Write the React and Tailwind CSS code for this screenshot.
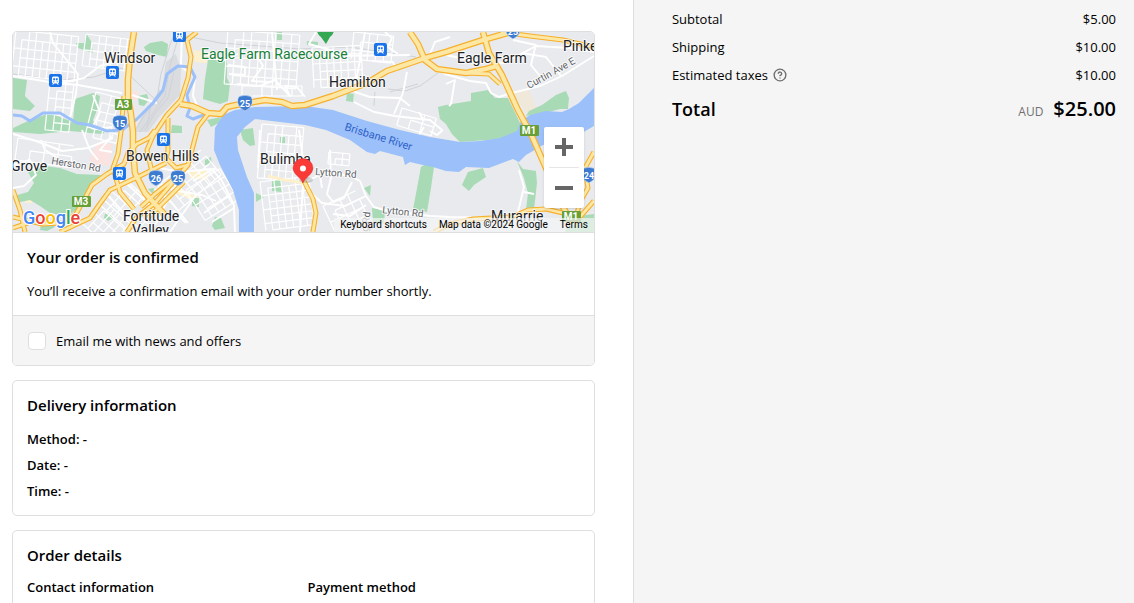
import React from 'react';
import { CircleHelp } from 'lucide-react';

const parks = [
    '76,43 84,43 86,33 91,41 93,53 78,48',
    '144,47 150,43 162,41 168,44 167,57 158,55 146,51',
    '13,78 27,80 25,96 35,106 30,111 13,109',
    '13,128 28,121 50,113 70,121 92,129 92,133 70,131 40,134 13,132',
    '75,99 93,93 100,96 98,108 93,120 97,128 84,128 73,122',
    '138,96 147,94 149,100 144,106 139,105',
    '208,60 227,60 227,78 230,84 228,101 220,104 203,99 205,79',
    '277,32 282,32 282,40 277,40',
    '207,120 221,117 219,123 211,127',
    '172,125 182,126 182,133 171,133',
    '307,41 318,42 318,45 307,45',
    '347,93 354,94 353,102 346,101',
    '438,107 446,105 471,101 471,93 488,90 495,98 508,98 524,131 500,139 460,142 452,134 446,124 440,119',
    '526,116 529,111 542,105 556,95 566,91 569,98 568,109 560,109 545,113',
    '240,130 253,128 255,145 250,146 243,140',
    '421,167 426,164 434,167 431,188 427,212 413,210',
    '364,188 371,185 370,196',
    '372,208 385,210 384,224 373,222',
    '468,172 483,168 486,177 474,185 469,191 462,185',
    '517,161 523,169 536,171 537,183 534,210 526,210 528,193 524,178',
    '28,172 44,166 60,168 77,174 100,175 104,177 88,188 83,203 75,211 66,216 50,213 40,206 30,200 15,203 14,196 28,192 34,183',
    '84,130 106,130 103,134 90,133',
    '105,214 110,213 113,218 108,221 104,218',
    '41,225 50,222 55,227 47,231 40,230',
    '148,189 154,188 153,194',
    '205,160 211,157 212,164 205,165',
    '192,198 199,198 199,207 192,206',
    '215,217 221,218 225,228 215,230 212,226',
    '272,179 282,179 282,192 272,191',
    '280,137 285,137 285,144 280,143',
    '256,193 264,197 256,202',
    '571,217 594,214 594,232 565,232',
];

// x, y, columns, rows, column step, row step, angle
const blocks = [
    [16, 30, 9, 5, 7, 9, 6],
    [86, 34, 7, 4, 7, 8, 7],
    [50, 82, 3, 6, 8, 8, 6],
    [96, 92, 4, 5, 8, 9, 14],
    [18, 138, 4, 2, 14, 11, 8],
    [228, 30, 9, 6, 8, 9, 4],
    [242, 86, 6, 1, 10, 10, 0],
    [312, 48, 7, 5, 7, 8, -3],
    [354, 32, 5, 3, 8, 9, 6],
    [262, 124, 6, 6, 7, 9, 5],
    [260, 182, 7, 7, 7, 7, -7],
    [329, 152, 3, 2, 7, 6, 5],
    [323, 206, 4, 3, 9, 9, -25],
    [124, 178, 6, 4, 9, 9, 42],
    [104, 200, 6, 4, 7, 8, 42],
    [186, 190, 5, 4, 8, 9, -32],
    [158, 186, 7, 4, 8, 8, -40],
    [402, 108, 3, 2, 12, 9, 17],
];

function blockPath([, , cols, rows, dx, dy]) {
    let d = '';
    for (let c = 0; c <= cols; c++) {
        const top = c % 3 === 1 ? dy : 0;
        d += `M${c * dx} ${top}V${rows * dy}`;
    }
    for (let r = 0; r <= rows; r++) {
        d += `M${r % 2 ? dx : 0} ${r * dy}H${cols * dx}`;
    }
    return d;
}

const streets = [
    'M13 76 55 83 78 85 122 93 M50 32 53 43 78 74 76 94 70 118 M61 83 84 78 100 66 122 60',
    'M93 95 100 112 93 126 97 129 112 127 M113 135 100 150 112 152 M13 134 36 141 62 151 88 148 113 138',
    'M13 165 30 160 36 175 24 186 13 188 M41 140 45 150 58 158 M82 130 90 150 98 160',
    'M160 168 180 172 212 169 222 181 234 205 235 232 M160 184 178 191 202 195 216 201 M196 195 170 232 M180 177 163 209',
    'M155 189 171 202 188 223 M105 192 133 223 M125 182 160 214 M215 168 193 181 M230 195 204 213 M234 208 212 222',
    'M195 77 193 96 200 112 208 118 M182 32 181 66 188 72 M228 65 245 67 245 75 229 74 M205 54 222 61 238 54',
    'M237 84 260 86 275 80 290 96 285 86 297 87 305 97 M255 52 263 66 252 81 270 82 M272 32 277 90',
    'M300 50 330 56 410 55 M365 32 360 60 354 92 M407 72 403 93 394 114 M354 102 374 112 395 116 430 120 442 130 M355 92 370 97 400 98 410 106',
    'M429 60 445 74 470 81 486 83 491 93 499 97 512 93 540 86 562 76 594 56 M446 84 455 80 451 104 449 106 M513 40 536 45 534 52 531 65 540 76',
    'M446 55 470 60 504 63 536 46 570 48 594 52 M430 54 435 42 450 37 M522 53 546 57 561 76',
    'M302 183 320 175 332 173 350 176 360 181 366 196 374 207 384 210 M384 210 400 212 430 216 450 217 490 218',
    'M303 185 300 232 M330 150 331 178 327 194 333 202 344 198 352 182 M320 175 322 188 M310 192 322 203 345 206 366 196 M366 205 350 216 333 214',
    'M519 170 524 187 518 212 M524 192 534 194 M430 131 437 135 443 130 M316 32 309 44 334 51 M299 130 304 166 M260 130 258 168',
    'M385 32 392 38 388 47 398 54 M372 61 393 62 397 71 M424 127 416 140 M419 112 424 121 M155 220 174 211 186 223 M132 95 157 103',
];

const rail = 'M13 74 60 80 94 77 122 68 160 104 M134 132 144 116 157 99 161 74 170 45 175 32 M140 132 150 118 165 96 170 66 179 35 M145 130 156 112 168 98 174 72 M147 128 151 104 160 90 M176 34 220 43 300 49 350 47 416 57 M388 89 405 91 420 86 438 73 M390 92 418 84 M375 92 374 106';

const highways = [
    'M124 96 121 132 118 154 113 168 120 192 134 209',
    'M155 130 149 138 137 144 128 153 124 164 107 174 92 185 84 200 76 214 62 223 42 224 13 217',
    'M166 163 140 176 110 190 99 205 90 218 60 232',
    'M13 190 20 210 25 232 M13 228 34 221',
    'M197 32 187 40 191 57 188 78 181 100 167 115 153 136 147 150 152 172',
    'M208 114 198 127 192 150 188 165 155 203 136 218 127 232',
    'M168 118 168 151 166 158 176 168 188 165 M180 174 155 194 141 207 M184 182 148 218',
    'M467 73 489 74 500 84',
    'M501 32 530 36 563 40 594 47',
    'M594 152 585 168 588 188 580 202 574 225 M594 201 580 217 546 209 528 210 512 217 473 219 450 224 434 232',
    'M304 181 313 199 316 213 313 232',
];

const motorways = [
    'M134 32 130 58 128 80 128 98 131 114 133 132 133 150 135 173 145 193 165 215',
    'M180 104 192 106 208 113 221 114 227 107 236 105 265 100 282 102 292 106 305 105 333 96 367 83 387 71 425 58 446 52 483 40 511 32',
    'M410 32 418 44 425 60 437 69 466 73 486 69 497 66',
    'M483 32 489 53 502 75 518 110 531 134 546 168 562 205 572 223',
];

const places = [
    { x: 104, y: 63, text: 'Windsor' },
    { x: 457, y: 63, text: 'Eagle Farm' },
    { x: 563, y: 51, text: 'Pinkenba' },
    { x: 329, y: 87, text: 'Hamilton' },
    { x: 126, y: 161, text: 'Bowen Hills' },
    { x: 260, y: 164, text: 'Bulimba' },
    { x: 11, y: 171, text: 'Grove' },
    { x: 123, y: 221, text: 'Fortitude' },
    { x: 132, y: 235, text: 'Valley' },
    { x: 491, y: 221, text: 'Murarrie' },
];

const stations = [[49, 74], [106, 66], [173, 29], [374, 43], [157, 133], [113, 167]];
const shields = [[120, 123, '15'], [245, 103, '25'], [156, 178, '26'], [178, 178, '25'], [513, 31, '25'], [589, 175, '24']];
const plates = [[115, 99, 'A3'], [72, 196, 'M3'], [520, 125, 'M1'], [562, 211, 'M1']];

const Station = ({ x, y }) => (
    <g transform={`translate(${x} ${y})`}>
        <rect width="13" height="13" rx="2" fill="#1a73e8" />
        <path d="M4.500 2.500h4q1.500 0 1.500 1.500v4q0 1-1 1.200l1 1.300H8.600l-.8-1H5.200l-.8 1H3l1-1.300Q3 9 3 8V4q0-1.500 1.500-1.500z" fill="#fff" />
        <path d="M4.300 4.200h1.800v2H4.300zM6.900 4.200h1.800v2H6.900zM4.300 7.300h1v1h-1zM7.700 7.300h1v1h-1z" fill="#1a73e8" />
    </g>
);

const MapArt = () => (
    <svg viewBox="13 32 581 200" preserveAspectRatio="xMidYMid slice" className="block h-full w-full font-[Roboto,sans-serif]" role="img" aria-label="Map of the delivery area">
        <rect x="13" y="32" width="581" height="200" fill="#e8eaed" />
        <path d="M134 132 146 108 162 90 166 62 176 54 181 70 180 95 160 116 148 132z" fill="#dadce0" />
        <path d="M90 157 98 143 112 144 110 165 92 166zM131 91h7v9h-7z" fill="#fae3e0" />
        <path d="M194 50 206 52 207 63 195 62zM188 170 207 171 207 180 190 178zM178 188 200 198 195 202 176 193zM25 199h7v4h-7z" fill="#fdf0cc" />
        <path d="M513 91 528 88 536 108 526 113z" fill="#f0e8d8" />
        <g fill="#a8dab5">{parks.map((p) => <polygon key={p} points={p} />)}</g>

        <path d={rail} fill="none" stroke="#cfd2d6" strokeWidth="1" />
        <g fill="none" stroke="#fff" strokeWidth="1.200">
            {blocks.map((b) => (
                <path key={`${b[0]}-${b[1]}`} d={blockPath(b)} transform={`translate(${b[0]} ${b[1]}) rotate(${b[6]})`} />
            ))}
        </g>
        <g fill="none" stroke="#fff" strokeWidth="1.900" strokeLinejoin="round">
            {streets.map((d) => <path key={d} d={d} />)}
        </g>
        <path d="M268 176 285 180 304 183" fill="none" stroke="#fdf0cc" strokeWidth="3" />

        <path d="M13 115 22 116 30 121 43 113 60 113 77 123 90 125 107 131 122 130 137 119 153 103 163 90 167 74 178 66 190 67 195 77 187 95 190 108 187 116 193 119 209 113" fill="none" stroke="#9cc0f9" strokeWidth="3" strokeLinejoin="round" />
        <path d="M223 115 235 110 255 107 305 106 333 110 367 121 400 130 430 137 460 142 480 141 500 138 517 131 521 121 530 115 546 111 562 112 569 109 579 103 594 88 594 126 575 137 543 145 526 155 519 162 513 159 489 168 466 167 459 172 446 171 433 167 423 165 410 162 405 165 403 157 380 151 375 154 367 152 350 140 326 130 305 125 255 119 245 127 237 137 238 150 247 177 254 193 254 232 239 232 239 210 233 190 220 165 214 150 215 128z" fill="#9cc0f9" />

        <g fill="none" strokeLinejoin="round">
            <g stroke="#f7b02c" strokeWidth="5">{highways.map((d) => <path key={d} d={d} />)}</g>
            <g stroke="#f7b02c" strokeWidth="6.600">{motorways.map((d) => <path key={d} d={d} />)}</g>
            <g stroke="#fde7a5" strokeWidth="2.800">{highways.map((d) => <path key={d} d={d} />)}</g>
            <g stroke="#fde7a5" strokeWidth="4.200">{motorways.map((d) => <path key={d} d={d} />)}</g>
        </g>

        {stations.map(([x, y]) => <Station key={`${x}-${y}`} x={x} y={y} />)}
        {shields.map(([x, y, n]) => (
            <g key={`${x}-${y}`} transform={`translate(${x} ${y})`}>
                <path d="M-6-6.500Q0-9 6-6.500Q8-4 7.300 0Q6.500 5 0 8Q-6.500 5-7.300 0Q-8-4-6-6.500z" fill="#3d7bd0" stroke="#e8f0fe" strokeWidth=".5" />
                <text y="4" textAnchor="middle" fontSize="9" fontWeight="700" fill="#fff">{n}</text>
            </g>
        ))}
        {plates.map(([x, y, n]) => (
            <g key={`${x}-${y}`}>
                <rect x={x} y={y} width={n === 'A3' ? 17 : 19} height="11" rx="1" fill="#689f38" />
                <text x={x + (n === 'A3' ? 8 : 9)} y={y + 9} textAnchor="middle" fontSize="10" fontWeight="700" fill="#fff">{n}</text>
            </g>
        ))}

        <g fontSize="14" fill="#202124" stroke="#fff" strokeWidth="2" strokeOpacity=".7" paintOrder="stroke" strokeLinejoin="round">
            {places.map((p) => <text key={p.text} x={p.x} y={p.y}>{p.text}</text>)}
            <text x="201" y="59" fill="#188038">Eagle Farm Racecourse</text>
        </g>
        <g fontSize="10" fill="#5f6368" stroke="#fff" strokeWidth="2" strokeOpacity=".8" paintOrder="stroke" strokeLinejoin="round">
            <text transform="translate(51 164) rotate(9)">Herston Rd</text>
            <text transform="translate(315 175) rotate(4)">Lytton Rd</text>
            <text transform="translate(382 213) rotate(6)">Lytton Rd</text>
            <text transform="translate(529 89) rotate(-29)">Curtin Ave E</text>
            <text transform="translate(368 232) rotate(-83)">g Rd</text>
        </g>
        <text transform="translate(344 130) rotate(17)" fontSize="11" fill="#2f62c9">Brisbane River</text>

        <path d="M317 30h17q0 4-4 7l-4 7-5-7q-4-3-4-7z" fill="#34a853" />
        <ellipse cx="306" cy="180" rx="7" ry="3" fill="#000" opacity=".15" />
        <path d="M303 183q-1-3-5-6.500-5-4-5-8.500a10 9.500 0 0 1 20 0q0 4.500-5 8.500-4 3.500-5 6.500z" fill="#f93a37" stroke="#d92f2c" strokeWidth=".5" />
        <circle cx="303" cy="168.500" r="3" fill="#fff" />
    </svg>
);

const GoogleMark = () => (
    <a href="#map" aria-label="Google" className="absolute bottom-0 left-[10px] font-[Roboto,sans-serif] text-[18px] leading-7 font-medium [paint-order:stroke] [-webkit-text-stroke:2px_white]">
        <span className="text-[#4285f4]">G</span>
        <span className="text-[#ea4335]">o</span>
        <span className="text-[#fbbc04]">o</span>
        <span className="text-[#4285f4]">g</span>
        <span className="text-[#34a853]">l</span>
        <span className="text-[#ea4335]">e</span>
    </a>
);

const DeliveryMap = () => (
    <div id="map" className="relative h-[201px] overflow-hidden border-b border-[#dedede]">
        <MapArt />
        <GoogleMark />
        <div className="absolute top-[95px] right-[10px] flex w-10 flex-col rounded-xs bg-white shadow">
            <button type="button" aria-label="Zoom in" className="flex h-10 items-center justify-center">
                <svg viewBox="0 0 18 18" className="size-[18px] fill-[#666]"><path d="M7 0h4v7h7v4h-7v7H7v-7H0V7h7z" /></svg>
            </button>
            <div className="mx-[5px] h-px bg-[#e6e6e6]" />
            <button type="button" aria-label="Zoom out" className="flex h-10 items-center justify-center">
                <svg viewBox="0 0 18 18" className="size-[18px] fill-[#666]"><path d="M0 7h18v4H0z" /></svg>
            </button>
        </div>
        <div className="absolute right-0 bottom-0 flex h-[14px] items-center gap-3 bg-[#f5f5f5]/70 px-[6px] font-[Roboto,sans-serif] text-[10px] leading-[14px] text-black">
            <button type="button">Keyboard shortcuts</button>
            <span>Map data ©2024 Google</span>
            <a href="#terms">Terms</a>
        </div>
    </div>
);

const Card = ({ children }) => (
    <section className="overflow-hidden rounded-[5px] border border-[#dedede] bg-white">{children}</section>
);

const SummaryRow = ({ label, value, children }) => (
    <div className="flex items-center justify-between">
        <dt className="flex items-center gap-[5px]">{label}{children}</dt>
        <dd>{value}</dd>
    </div>
);

const App = () => {
    return (
        <div className="grid min-h-screen grid-cols-[24fr_19fr] bg-white font-['Open_Sans','Noto_Sans',sans-serif] text-[13px] leading-5 text-black">
            <main className="flex h-screen flex-col gap-[14px] overflow-hidden pt-[31px] pr-[38px] pl-3 *:shrink-0">
                <Card>
                    <DeliveryMap />
                    <div className="flex flex-col gap-[14px] p-[14px]">
                        <h2 className="text-[15px] font-semibold">Your order is confirmed</h2>
                        <p>You’ll receive a confirmation email with your order number shortly.</p>
                    </div>
                    <div className="border-t border-[#dedede] bg-[#f5f5f5] px-[15px] pt-[15px] pb-[14px]">
                        <label className="flex items-center gap-[10px]">
                            <input type="checkbox" className="size-[18px] appearance-none rounded-[4px] border border-[#dedede] bg-white checked:bg-[#1773b0]" />
                            Email me with news and offers
                        </label>
                    </div>
                </Card>

                <Card>
                    <div className="flex flex-col gap-[14px] p-[14px]">
                        <h2 className="text-[15px] font-semibold">Delivery information</h2>
                        <div className="flex flex-col gap-[6px] font-semibold">
                            <p>Method: -</p>
                            <p>Date: -</p>
                            <p>Time: -</p>
                        </div>
                    </div>
                </Card>

                <Card>
                    <div className="flex flex-col gap-3 p-[14px]">
                        <h2 className="text-[15px] font-semibold">Order details</h2>
                        <div className="grid grid-cols-2 gap-2 font-semibold">
                            <h3>Contact information</h3>
                            <h3>Payment method</h3>
                        </div>
                    </div>
                </Card>
            </main>

            <aside className="border-l border-[#dedede] bg-[#f5f5f5] pt-[9px] pr-[18px] pl-[38px]">
                <dl className="flex flex-col gap-2">
                    <SummaryRow label="Subtotal" value="$5.00" />
                    <SummaryRow label="Shipping" value="$10.00" />
                    <SummaryRow label="Estimated taxes" value="$10.00">
                        <button type="button" aria-label="About estimated taxes" className="text-[#707070]">
                            <CircleHelp size={14} strokeWidth={2.4} />
                        </button>
                    </SummaryRow>
                    <div className="flex items-center justify-between pt-[2px] leading-7 font-semibold">
                        <dt className="text-[18px]">Total</dt>
                        <dd className="flex items-baseline gap-[10px] text-[20px]">
                            <abbr className="text-xs font-normal text-[#707070] no-underline">AUD</abbr>
                            $25.00
                        </dd>
                    </div>
                </dl>
            </aside>
        </div>
    );
};

export default App;
